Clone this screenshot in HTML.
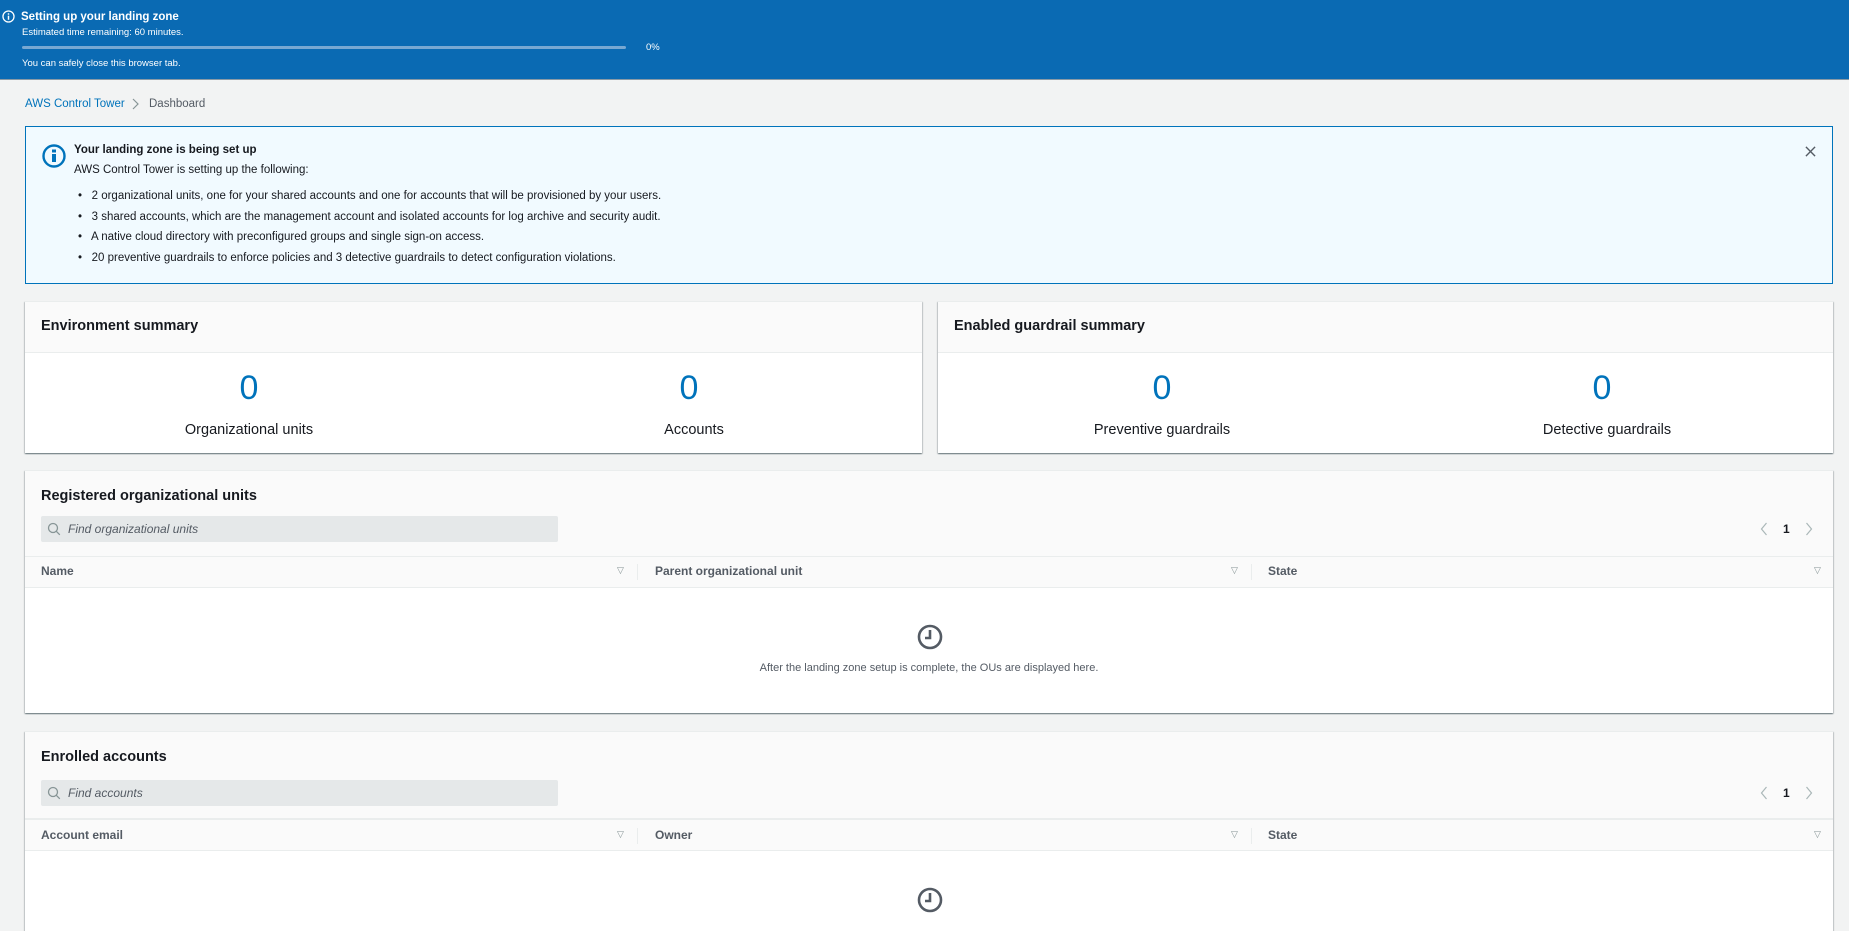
<!DOCTYPE html>
<html><head><meta charset="utf-8"><style>
*{box-sizing:border-box;margin:0;padding:0}
body{width:1849px;height:895px;overflow:hidden;background:#f2f3f3;font-family:"Liberation Sans",Arial,sans-serif;color:#16191f;position:relative}
.a{position:absolute}
.banner{left:0;top:0;width:1849px;height:80px;background:#0a6ab3;color:#fff;border-bottom:1px solid #8a9aa6}
.panel{background:#fff;box-shadow:0 1px 1px 0 rgba(0,28,36,.4),1px 1px 1px 0 rgba(0,28,36,.15),-1px 1px 1px 0 rgba(0,28,36,.15);border-top:1px solid #eaeded}
.ph{background:#fafafa;border-bottom:1px solid #eaeded}
.pt{font-weight:bold;font-size:14.5px}
.num{font-size:34px;color:#0073bb;text-align:center;width:448px;font-weight:300}
.lbl{font-size:14.5px;text-align:center;width:448px}
.search{background:#e5e8e9;border-radius:2px}
.search span{position:absolute;left:27px;top:6px;font-style:italic;color:#545b64;font-size:12px}
.th{font-weight:bold;font-size:12px;color:#545b64}
.tri{font-size:9px;color:#879596}
.div{width:1px;height:16px;background:#eaeded}
</style></head><body>
<div class="a banner">
 <svg class="a" style="left:2px;top:10px" width="13" height="13" viewBox="0 0 16 16"><circle cx="8" cy="8" r="6.8" fill="none" stroke="#fff" stroke-width="1.6"/><rect x="7.1" y="7" width="1.8" height="5" fill="#fff"/><rect x="7.1" y="4" width="1.8" height="1.8" fill="#fff"/></svg>
 <div class="a" style="left:21px;top:11px;font-size:11.5px;font-weight:bold">Setting up your landing zone</div>
 <div class="a" style="left:22px;top:27px;font-size:9.5px">Estimated time remaining: 60 minutes.</div>
 <div class="a" style="left:22px;top:46px;width:604px;height:3px;background:#78a8d2;border-radius:2px"></div>
 <div class="a" style="left:646px;top:42px;font-size:9.5px">0%</div>
 <div class="a" style="left:22px;top:58px;font-size:9.5px">You can safely close this browser tab.</div>
</div>
<div class="a" style="left:25px;top:98px;font-size:11.5px;color:#0073bb">AWS Control Tower</div>
<svg class="a" style="left:131px;top:97px" width="9" height="14" viewBox="0 0 9 14"><path d="M2 2l5 5-5 5" fill="none" stroke="#879596" stroke-width="1.2"/></svg>
<div class="a" style="left:149px;top:98px;font-size:11.5px;color:#545b64">Dashboard</div>

<div class="a" style="left:25px;top:126px;width:1808px;height:158px;background:#f1faff;border:1px solid #0073bb">
 <svg class="a" style="left:16px;top:17px" width="24" height="24" viewBox="0 0 24 24"><circle cx="12" cy="12" r="10.5" fill="none" stroke="#0073bb" stroke-width="2.4"/><rect x="10" y="10" width="4" height="8" fill="#0073bb"/><rect x="10" y="5.5" width="4" height="3" fill="#0073bb"/></svg>
 <div class="a" style="left:48px;top:17px;font-size:11.5px;font-weight:bold">Your landing zone is being set up</div>
 <div class="a" style="left:48px;top:37px;font-size:11.5px">AWS Control Tower is setting up the following:</div>
 <div class="a" style="left:52px;top:59px;font-size:11.5px;line-height:20.5px">
  <div>•&nbsp;&nbsp; 2 organizational units, one for your shared accounts and one for accounts that will be provisioned by your users.</div>
  <div>•&nbsp;&nbsp; 3 shared accounts, which are the management account and isolated accounts for log archive and security audit.</div>
  <div>•&nbsp;&nbsp; A native cloud directory with preconfigured groups and single sign-on access.</div>
  <div>•&nbsp;&nbsp; 20 preventive guardrails to enforce policies and 3 detective guardrails to detect configuration violations.</div>
 </div>
 <svg class="a" style="left:1779px;top:19px" width="11" height="11" viewBox="0 0 12 12"><path d="M1 1l10 10M11 1L1 11" stroke="#545b64" stroke-width="1.5"/></svg>
</div>

<div class="a panel" style="left:25px;top:301px;width:897px;height:152px">
 <div class="a ph" style="left:0;top:0;width:897px;height:51px"></div>
 <div class="a pt" style="left:16px;top:16px">Environment summary</div>
 <div class="a num" style="left:0;top:67px">0</div><div class="a num" style="left:440px;top:67px">0</div>
 <div class="a lbl" style="left:0;top:120px">Organizational units</div><div class="a lbl" style="left:445px;top:120px">Accounts</div>
</div>
<div class="a panel" style="left:938px;top:301px;width:895px;height:152px">
 <div class="a ph" style="left:0;top:0;width:895px;height:51px"></div>
 <div class="a pt" style="left:16px;top:16px">Enabled guardrail summary</div>
 <div class="a num" style="left:0;top:67px">0</div><div class="a num" style="left:440px;top:67px">0</div>
 <div class="a lbl" style="left:0;top:120px">Preventive guardrails</div><div class="a lbl" style="left:445px;top:120px">Detective guardrails</div>
</div>

<div class="a panel" style="left:25px;top:470px;width:1808px;height:243px">
 <div class="a ph" style="left:0;top:0;width:1808px;height:86px"></div>
 <div class="a pt" style="left:16px;top:17px">Registered organizational units</div>
 <div class="a search" style="left:16px;top:45px;width:517px;height:26px">
  <svg class="a" style="left:6px;top:6px" width="14" height="14" viewBox="0 0 14 14"><circle cx="6" cy="6" r="4.5" fill="none" stroke="#879596" stroke-width="1.3"/><path d="M9.3 9.3l3.5 3.5" stroke="#879596" stroke-width="1.3"/></svg>
  <span>Find organizational units</span></div>
 <svg class="a" style="left:1735px;top:51px" width="8" height="14" viewBox="0 0 8 14"><path d="M6.5 1L1.5 7l5 6" fill="none" stroke="#aab7b8" stroke-width="1.2"/></svg>
 <div class="a" style="left:1758px;top:51px;font-size:12px;font-weight:bold">1</div>
 <svg class="a" style="left:1780px;top:51px" width="8" height="14" viewBox="0 0 8 14"><path d="M1.5 1l5 6-5 6" fill="none" stroke="#aab7b8" stroke-width="1.2"/></svg>
 <div class="a" style="left:0;top:86px;width:1808px;height:31px;border-bottom:1px solid #eaeded;background:#fafafa"></div>
 <div class="a th" style="left:16px;top:93px">Name</div>
 <div class="a tri" style="left:592px;top:94px">▽</div><div class="a div" style="left:612px;top:93px"></div>
 <div class="a th" style="left:630px;top:93px">Parent organizational unit</div>
 <div class="a tri" style="left:1206px;top:94px">▽</div><div class="a div" style="left:1226px;top:93px"></div>
 <div class="a th" style="left:1243px;top:93px">State</div>
 <div class="a tri" style="left:1789px;top:94px">▽</div>
 <svg class="a" style="left:892px;top:153px" width="26" height="26" viewBox="0 0 26 26"><circle cx="13" cy="13" r="11" fill="none" stroke="#545b64" stroke-width="2.6"/><path d="M13 6v8H8" fill="none" stroke="#545b64" stroke-width="2.6"/></svg>
 <div class="a" style="left:0;top:191px;width:1808px;text-align:center;font-size:11px;color:#545b64">After the landing zone setup is complete, the OUs are displayed here.</div>
</div>

<div class="a panel" style="left:25px;top:731px;width:1808px;height:200px">
 <div class="a ph" style="left:0;top:0;width:1808px;height:87px"></div>
 <div class="a pt" style="left:16px;top:17px">Enrolled accounts</div>
 <div class="a search" style="left:16px;top:48px;width:517px;height:26px">
  <svg class="a" style="left:6px;top:6px" width="14" height="14" viewBox="0 0 14 14"><circle cx="6" cy="6" r="4.5" fill="none" stroke="#879596" stroke-width="1.3"/><path d="M9.3 9.3l3.5 3.5" stroke="#879596" stroke-width="1.3"/></svg>
  <span>Find accounts</span></div>
 <svg class="a" style="left:1735px;top:54px" width="8" height="14" viewBox="0 0 8 14"><path d="M6.5 1L1.5 7l5 6" fill="none" stroke="#aab7b8" stroke-width="1.2"/></svg>
 <div class="a" style="left:1758px;top:54px;font-size:12px;font-weight:bold">1</div>
 <svg class="a" style="left:1780px;top:54px" width="8" height="14" viewBox="0 0 8 14"><path d="M1.5 1l5 6-5 6" fill="none" stroke="#aab7b8" stroke-width="1.2"/></svg>
 <div class="a" style="left:0;top:87px;width:1808px;height:32px;border-bottom:1px solid #eaeded;border-top:1px solid #eaeded;background:#fafafa"></div>
 <div class="a th" style="left:16px;top:96px">Account email</div>
 <div class="a tri" style="left:592px;top:97px">▽</div><div class="a div" style="left:612px;top:96px"></div>
 <div class="a th" style="left:630px;top:96px">Owner</div>
 <div class="a tri" style="left:1206px;top:97px">▽</div><div class="a div" style="left:1226px;top:96px"></div>
 <div class="a th" style="left:1243px;top:96px">State</div>
 <div class="a tri" style="left:1789px;top:97px">▽</div>
 <svg class="a" style="left:892px;top:155px" width="26" height="26" viewBox="0 0 26 26"><circle cx="13" cy="13" r="11" fill="none" stroke="#545b64" stroke-width="2.6"/><path d="M13 6v8H8" fill="none" stroke="#545b64" stroke-width="2.6"/></svg>
</div>
</body></html>
